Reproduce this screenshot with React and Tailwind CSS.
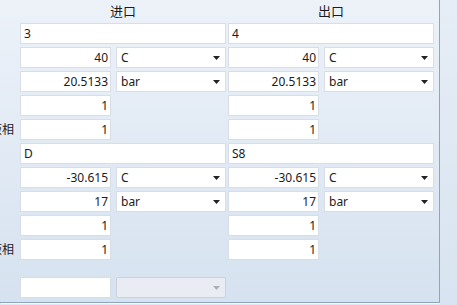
const font = "font-['Noto_Sans','Noto_Sans_CJK_SC',sans-serif]";

function Box({ value, right, wide }) {
  return (
    <div
      className={`h-[21px] bg-white border border-[#d8dee6] flex items-center text-[12px] text-[#1b1b1b] whitespace-nowrap ${
        wide ? 'w-[206px]' : 'w-[91px]'
      } ${right ? 'justify-end pr-[2px]' : 'pl-[3px]'}`}
    >
      {value}
    </div>
  );
}

function Select({ value, disabled }) {
  return (
    <div
      className={`h-[21px] w-[110px] border flex items-center justify-between pl-[4px] pr-[5px] text-[12px] ${
        disabled ? 'bg-[#e9edf3] border-[#c9d2de] rounded-[2px]' : 'bg-white border-[#d8dee6] text-[#1b1b1b]'
      }`}
    >
      <span>{value}</span>
      <svg width="7" height="4" viewBox="0 0 7 4">
        <path d="M0 0h7L3.5 4z" fill={disabled ? '#a9b0ba' : '#222'} />
      </svg>
    </div>
  );
}

function Side({ cell }) {
  if (!cell) return <div className="w-[206px]" />;
  if (cell.text !== undefined) return <Box value={cell.text} wide />;
  return (
    <div className="w-[206px] flex gap-[5px]">
      <Box value={cell.num} right />
      {cell.unit !== undefined && <Select value={cell.unit} disabled={cell.disabled} />}
    </div>
  );
}

function Row({ label, left, right, className = '' }) {
  return (
    <div className={`flex h-[21px] ${className}`}>
      {/* label column is narrower than its text, the left part is cut off like in the dialog */}
      <div className="w-[20px] overflow-hidden flex justify-end items-center pr-[6px] whitespace-nowrap text-[12px] text-[#1b1b1b]">
        {label}
      </div>
      <div className="flex gap-[2px]">
        <Side cell={left} />
        <Side cell={right} />
      </div>
    </div>
  );
}

export default function App() {
  return (
    <div className={`flex w-[457px] h-[305px] overflow-hidden bg-[#dce6f2] ${font}`}>
      <div className="w-[440px] h-[303px] shrink-0 border-r border-b border-[#8ea4bf] bg-gradient-to-b from-[#edf2f9] to-[#d6e2f0] shadow-[1px_1px_0_#f5f8fc]">
        <div className="flex pl-[20px] gap-[2px] h-[23px] items-center text-[13px] text-[#1b1b1b]">
          <div className="w-[206px] text-center">进口</div>
          <div className="w-[206px] text-center">出口</div>
        </div>
        <div className="flex flex-col gap-[3px]">
          <Row left={{ text: '3' }} right={{ text: '4' }} />
          <Row left={{ num: '40', unit: 'C' }} right={{ num: '40', unit: 'C' }} />
          <Row left={{ num: '20.5133', unit: 'bar' }} right={{ num: '20.5133', unit: 'bar' }} />
          <Row left={{ num: '1' }} right={{ num: '1' }} />
          <Row label="液相" left={{ num: '1' }} right={{ num: '1' }} />
          <Row left={{ text: 'D' }} right={{ text: 'S8' }} />
          <Row left={{ num: '-30.615', unit: 'C' }} right={{ num: '-30.615', unit: 'C' }} />
          <Row left={{ num: '17', unit: 'bar' }} right={{ num: '17', unit: 'bar' }} />
          <Row left={{ num: '1' }} right={{ num: '1' }} />
          <Row label="液相" left={{ num: '1' }} right={{ num: '1' }} />
          <Row className="mt-[14px]" left={{ num: '', unit: '', disabled: true }} />
        </div>
      </div>
      <div className="flex-1 bg-gradient-to-b from-[#e6edf6] to-[#d8e4f1]" />
    </div>
  );
}
